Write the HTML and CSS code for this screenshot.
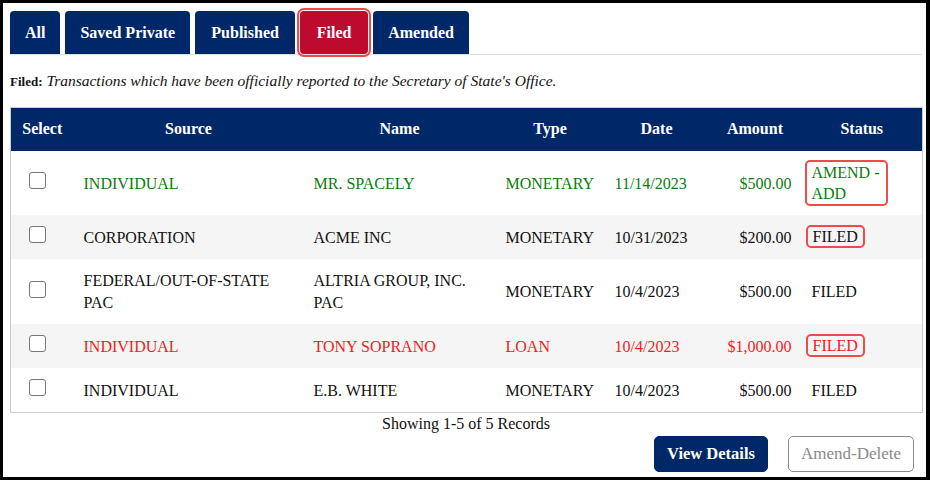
FILE: index.html
```html
<!DOCTYPE html>
<html lang="en">
<head>
<meta charset="utf-8">
<title>Transactions</title>
<link rel="stylesheet" href="styles.css">
</head>
<body>
<div class="frame">
  <div class="tabs">
    <button class="tab">All</button>
    <button class="tab">Saved Private</button>
    <button class="tab t-pub">Published</button>
    <button class="tab active">Filed</button>
    <button class="tab t-amd">Amended</button>
  </div>
  <p class="desc"><b>Filed:</b> <i>Transactions which have been officially reported to the Secretary of State's Office.</i></p>
  <table class="grid">
    <colgroup>
      <col class="c-select"><col class="c-source"><col class="c-name"><col class="c-type"><col class="c-date"><col class="c-amount"><col class="c-status">
    </colgroup>
    <thead>
      <tr><th>Select</th><th>Source</th><th>Name</th><th>Type</th><th>Date</th><th>Amount</th><th>Status</th></tr>
    </thead>
    <tbody>
      <tr class="green">
        <td class="sel"><input type="checkbox" class="chk"></td>
        <td>INDIVIDUAL</td><td>MR. SPACELY</td><td>MONETARY</td><td>11/14/2023</td><td class="amt">$500.00</td>
        <td><span class="badge wide">AMEND - ADD</span></td>
      </tr>
      <tr class="alt">
        <td class="sel"><input type="checkbox" class="chk"></td>
        <td>CORPORATION</td><td>ACME INC</td><td>MONETARY</td><td>10/31/2023</td><td class="amt">$200.00</td>
        <td><span class="badge">FILED</span></td>
      </tr>
      <tr>
        <td class="sel"><input type="checkbox" class="chk"></td>
        <td>FEDERAL/OUT-OF-STATE PAC</td><td>ALTRIA GROUP, INC. PAC</td><td>MONETARY</td><td>10/4/2023</td><td class="amt">$500.00</td>
        <td>FILED</td>
      </tr>
      <tr class="alt red">
        <td class="sel"><input type="checkbox" class="chk"></td>
        <td>INDIVIDUAL</td><td>TONY SOPRANO</td><td>LOAN</td><td>10/4/2023</td><td class="amt">$1,000.00</td>
        <td><span class="badge">FILED</span></td>
      </tr>
      <tr>
        <td class="sel"><input type="checkbox" class="chk"></td>
        <td>INDIVIDUAL</td><td>E.B. WHITE</td><td>MONETARY</td><td>10/4/2023</td><td class="amt">$500.00</td>
        <td>FILED</td>
      </tr>
    </tbody>
  </table>
  <div class="count">Showing 1-5 of 5 Records</div>
  <div class="actions">
    <button class="btn primary">View Details</button>
    <button class="btn ghost">Amend-Delete</button>
  </div>
</div>
</body>
</html>
```

FILE: styles.css
```css
* { box-sizing: border-box; }
html, body { margin: 0; padding: 0; background: #fff; }
body { font-family: "Liberation Serif", "Times New Roman", serif; color: #111; }

.frame {
  width: 930px;
  height: 480px;
  border-style: solid;
  border-color: #000;
  border-width: 3px 4px 3px 3px;
  padding: 8px 4px 0 7px;
  background: #fff;
}

.tabs {
  display: flex;
  gap: 5px;
  border-bottom: 1px solid #dedede;
}
.tab {
  height: 43px;
  padding: 0 15px;
  border: none;
  border-radius: 4px 4px 0 0;
  background: #002868;
  color: #fff;
  font-family: "Liberation Serif", serif;
  font-weight: bold;
  font-size: 16px;
}
.tab.t-pub { width: 100px; padding: 0; }
.tab.t-amd { width: 96px; padding: 0; }
.tab.active {
  background: #bf0a30;
  outline: 2px solid #f04a4a;
  outline-offset: 1px;
  border-radius: 4px;
  width: 68px;
  padding: 0;
}

.desc {
  margin: 16px 0;
  height: 20px;
  line-height: 20px;
  font-size: 15.5px;
}
.desc b { font-weight: bold; font-size: 13px; }
.desc i { font-size: 15.5px; }

.grid {
  width: 912px;
  table-layout: fixed;
  border-collapse: collapse;
  border: 1px solid #cccccc;
  font-size: 16px;
}
.c-select { width: 63px; }
.c-source { width: 230px; }
.c-name { width: 192px; }
.c-type { width: 109px; }
.c-date { width: 104px; }
.c-amount { width: 93px; }
.c-status { width: 121px; }

.grid th {
  background: #002868;
  color: #fff;
  font-weight: bold;
  text-align: center;
  padding: 10px 0 11px;
  line-height: 22px;
}
.grid td {
  padding: 11px 10px 10px;
  line-height: 22px;
  vertical-align: middle;
  text-align: left;
  color: #111;
}
.grid tr.alt td { background: #f5f5f5; }
.grid tr.green td { color: #0a7d0a; }
.grid tr.red td { color: #f21b1b; }
.grid td.amt { text-align: right; }
.grid td.sel { padding-left: 18px; }

.chk {
  appearance: none;
  -webkit-appearance: none;
  display: block;
  width: 17px;
  height: 17px;
  margin: 0 0 6px 0;
  border: 1px solid #767676;
  border-radius: 3px;
  background: #fff;
}

.badge {
  display: inline-block;
  margin: -2px -6px;
  padding: 0 5px;
  border: 2px solid #f04a4a;
  border-radius: 5px;
  line-height: 19px;
  vertical-align: top;
}
.badge.wide { max-width: 83px; margin: -2px -7px -1px; line-height: 21px; }

.count {
  text-align: center;
  line-height: 22px;
  font-size: 16px;
  color: #111;
}

.actions {
  display: flex;
  justify-content: flex-end;
  gap: 20px;
  margin-top: 1px;
  padding-right: 8px;
}
.btn {
  height: 36px;
  padding: 0 12px;
  border-radius: 5px;
  font-family: "Liberation Serif", serif;
  font-size: 16.5px;
}
.btn.primary {
  background: #002868;
  border: 1px solid #002868;
  color: #fff;
  font-weight: bold;
}
.btn.ghost {
  background: #fff;
  border: 1px solid #8a8a8a;
  color: #8a8a8a;
  font-size: 17px;
}
```
